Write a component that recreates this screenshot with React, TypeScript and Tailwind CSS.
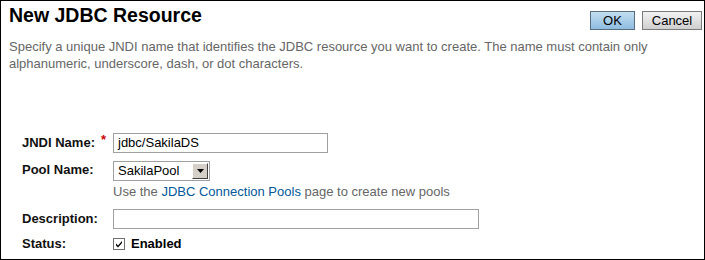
export default function App() {
  return (
    <div
      className="w-[705px] h-[260px] border border-black bg-white overflow-hidden"
      style={{ fontFamily: '"Liberation Sans", Arial, sans-serif' }}
    >
      <div className="flex justify-between items-start">
        <h1 className="pl-[8px] pt-[2px] text-[19.5px] leading-[25px] font-bold text-black">New JDBC Resource</h1>
        <div className="flex gap-[7px] pt-[10px] pr-[2px]">
          <button className="w-[45px] h-[19px] text-[13px] leading-[17px] text-black border border-[#5a6d80] bg-gradient-to-b from-[#c3ddf0] to-[#8ebde0]">
            OK
          </button>
          <button className="w-[60px] h-[19px] text-[13px] leading-[17px] text-black border border-[#7a7a7a] bg-gradient-to-b from-[#f2f2f2] to-[#cfcfcf]">
            Cancel
          </button>
        </div>
      </div>
      <p className="pl-[8px] pr-[40px] mt-[8px] text-[13px] leading-[17px] text-[#666666]">
        Specify a unique JNDI name that identifies the JDBC resource you want to create. The name must contain only alphanumeric, underscore, dash, or dot characters.
      </p>

      <div className="pl-[21px] mt-[61px] flex flex-col text-[13px]">
        <div className="flex items-center h-[20px]">
          <div className="w-[91px] relative font-bold text-[#111]">
            JNDI Name:
            <span className="absolute left-[79px] top-[-3px] text-[#cc0000] text-[13px]">*</span>
          </div>
          <div className="w-[215px] h-[20px] border border-[#a0a0a0] pl-[4px] leading-[18px] text-black">jdbc/SakilaDS</div>
        </div>

        <div className="flex items-start mt-[8px]">
          <div className="w-[91px] font-bold text-[#111] leading-[16px] pt-[1px]">Pool Name:</div>
          <div className="flex flex-col">
            <div className="w-[97px] h-[20px] border border-[#a0a0a0] flex items-center justify-between">
              <span className="pl-[4px] leading-[18px] text-black">SakilaPool</span>
              <span className="w-[16px] h-[16px] mr-[1px] bg-[#d4d0c8] border border-t-white border-l-white border-r-[#404040] border-b-[#404040] flex items-center justify-center">
                <svg width="7" height="4" viewBox="0 0 7 4">
                  <path d="M0 0h7L3.5 4z" fill="#000" />
                </svg>
              </span>
            </div>
            <div className="mt-[3px] leading-[16px] text-[#666666]">
              Use the <span className="text-[#035899]">JDBC Connection Pools</span> page to create new pools
            </div>
          </div>
        </div>

        <div className="flex items-center h-[20px] mt-[9px]">
          <div className="w-[91px] font-bold text-[#111]">Description:</div>
          <div className="w-[366px] h-[20px] border border-[#a0a0a0]"></div>
        </div>

        <div className="flex items-center h-[16px] mt-[7px]">
          <div className="w-[91px] font-bold text-[#111]">Status:</div>
          <div className="flex items-center gap-[6px]">
            <svg width="12" height="12" viewBox="0 0 12 12">
              <rect x="0.5" y="0.5" width="11" height="11" fill="#fff" stroke="#707070" />
              <path d="M3 5.5l2 2 4-4.5v2l-4 4.5-2-2z" fill="#000" />
            </svg>
            <span className="font-bold text-black">Enabled</span>
          </div>
        </div>
      </div>
    </div>
  );
}
